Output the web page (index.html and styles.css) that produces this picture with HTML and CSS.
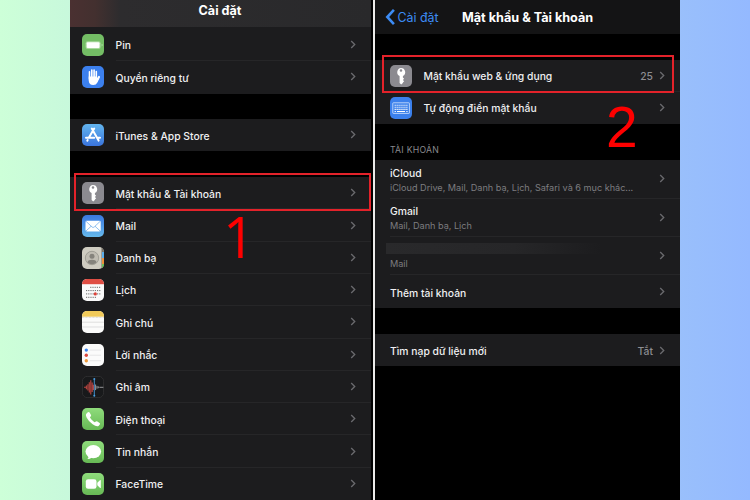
FILE: index.html
```html
<!DOCTYPE html>
<html lang="vi">
<head>
    <meta charset="UTF-8">
    <meta name="viewport" content="width=device-width, initial-scale=1.0">
    <title>Cài đặt - Mật khẩu &amp; Tài khoản</title>
    <link rel="stylesheet" href="styles.css">
</head>
<body>
    <svg class="defs" width="0" height="0">
        <defs>
            <linearGradient id="green" x1="0" y1="0" x2="0" y2="1">
                <stop offset="0" stop-color="#8fdc7c"/>
                <stop offset="1" stop-color="#67b955"/>
            </linearGradient>
            <linearGradient id="store" x1="0" y1="0" x2="0" y2="1">
                <stop offset="0" stop-color="#63b5ee"/>
                <stop offset="1" stop-color="#3a74dd"/>
            </linearGradient>
            <linearGradient id="mail" x1="0" y1="0" x2="0" y2="1">
                <stop offset="0" stop-color="#3a78e0"/>
                <stop offset="1" stop-color="#66b9ec"/>
            </linearGradient>
            <clipPath id="round"><rect width="22" height="22" rx="5"/></clipPath>
        </defs>
        <symbol id="arrow" viewBox="0 0 6 9">
            <path d="M1.2 1.1 4.7 4.5 1.2 7.9" fill="none" stroke="currentColor" stroke-width="1.35"/>
        </symbol>
        <symbol id="key" viewBox="0 0 22 22">
            <rect width="22" height="22" rx="5" fill="#8b8a90"/>
            <path fill="#fff" fill-rule="evenodd" d="M11 2.9a4.3 4.3 0 0 1 1.9 8.1v1.6l1.2 1.1-1.2 1.2 1.3 1.3-1.3 1.3v.4L11.2 19.4 9.6 18v-7A4.3 4.3 0 0 1 11 2.9zm0 1.3a1.3 1.3 0 1 0 0 2.6 1.3 1.3 0 0 0 0-2.6z"/>
        </symbol>
    </svg>

    <div class="stage">
        <div class="phone phone-left">
            <div class="header header-left">Cài đặt</div>
            <div class="group group-first">
                <div class="row">
                    <svg class="icon" viewBox="0 0 22 22"><rect width="22" height="22" rx="5" fill="#74bd65"/><rect x="3.6" y="7.2" width="15" height="7.8" rx="2" fill="#a9d99e"/><rect x="4.7" y="8.3" width="12.8" height="5.6" rx="1" fill="#fff"/><path d="M19.6 9.8v2.6q1-.4 1-1.3t-1-1.3z" fill="#b9e2b0"/></svg>
                    <div class="cell"><span class="label">Pin</span><svg class="arrow"><use href="#arrow"/></svg></div>
                </div>
                <div class="row">
                    <svg class="icon" viewBox="0 0 22 22"><rect width="22" height="22" rx="5" fill="#3c80ee"/><g stroke="#fff" stroke-linecap="round" fill="none"><path d="M7.5 5.7V13M9.8 4V12M12.1 4V12M14.3 5.6V13" stroke-width="1.6"/><path d="M17 10.8 14.5 15" stroke-width="1.9"/></g><path d="M6.7 10.5h8.4v2.2l1.8-2 .9.8-2.4 5Q14.2 19 11.3 19 7 19 6.7 14.5z" fill="#fff"/></svg>
                    <div class="cell"><span class="label">Quyền riêng tư</span><svg class="arrow"><use href="#arrow"/></svg></div>
                </div>
            </div>
            <div class="group">
                <div class="row">
                    <svg class="icon" viewBox="0 0 22 22"><rect width="22" height="22" rx="5" fill="url(#store)"/><g stroke="#fff" stroke-width="2" stroke-linecap="round" fill="none"><path d="M12.2 4.6 6.8 13.7M9.8 4.6 16.6 16.6M4 13.8h8.2M15.4 13.8H18M5.7 16 5.3 16.7"/></g></svg>
                    <div class="cell"><span class="label">iTunes &amp; App Store</span><svg class="arrow"><use href="#arrow"/></svg></div>
                </div>
            </div>
            <div class="group group-last">
                <div class="row">
                    <svg class="icon"><use href="#key"/></svg>
                    <div class="cell"><span class="label">Mật khẩu &amp; Tài khoản</span><svg class="arrow"><use href="#arrow"/></svg></div>
                    <div class="mark mark-1"></div>
                </div>
                <div class="row">
                    <svg class="icon" viewBox="0 0 22 22"><rect width="22" height="22" rx="5" fill="url(#mail)"/><rect x="3.5" y="5.7" width="15.2" height="10.7" rx="1.4" fill="#fff"/><path d="M4 6.3 10 12q1.1 1 2.2 0l6-5.7M4 16l5.2-4.8M18.2 16 13 11.2" fill="none" stroke="#63a5e6" stroke-width=".7"/></svg>
                    <div class="cell"><span class="label">Mail</span><svg class="arrow"><use href="#arrow"/></svg></div>
                </div>
                <div class="row">
                    <svg class="icon" viewBox="0 0 22 22"><g clip-path="url(#round)"><rect width="22" height="22" fill="#cfccc1"/><path d="M19.5 0H22v22h-2.5z" fill="#777268"/><path d="M20 5h2v6h-2z" fill="#5aaeea"/><path d="M20 11h2v6h-2z" fill="#ee923c"/><path d="M20 17h2v5h-2z" fill="#68c45a"/></g><circle cx="10" cy="11" r="6.7" fill="#c0bdb3" stroke="#918f87" stroke-width=".7"/><circle cx="10" cy="9.2" r="2.5" fill="#85837c"/><path d="M5.4 15.2Q6.3 12.8 10 12.8t4.6 2.4Q12.8 17.3 10 17.3t-4.6-2.1z" fill="#85837c"/></svg>
                    <div class="cell"><span class="label">Danh bạ</span><svg class="arrow"><use href="#arrow"/></svg></div>
                </div>
                <div class="row">
                    <svg class="icon" viewBox="0 0 22 22"><g clip-path="url(#round)"><rect width="22" height="22" fill="#fafafa"/><rect width="22" height="5.2" fill="#df4d43"/></g><g stroke="#6a6a6a" stroke-width="1" stroke-dasharray="1.2 1"><path d="M8.2 8.3H19M4 11.6H19M4 14.9H19M4 18.3h10.5"/></g><circle cx="13.3" cy="14.9" r="1.6" fill="#dd4238"/></svg>
                    <div class="cell"><span class="label">Lịch</span><svg class="arrow"><use href="#arrow"/></svg></div>
                </div>
                <div class="row">
                    <svg class="icon" viewBox="0 0 22 22"><g clip-path="url(#round)"><rect width="22" height="22" fill="#fbfbfa"/><rect width="22" height="5.7" fill="#f1ca59"/><path d="M0 6.4h22" stroke="#b8b4a6" stroke-width=".6" stroke-dasharray=".7 .7"/><path d="M0 11.2h22M0 16h22" stroke="#d3d3d3" stroke-width=".7"/></g></svg>
                    <div class="cell"><span class="label">Ghi chú</span><svg class="arrow"><use href="#arrow"/></svg></div>
                </div>
                <div class="row">
                    <svg class="icon" viewBox="0 0 22 22"><rect width="22" height="22" rx="5" fill="#fbfbfb"/><path d="M7.7 6.1H19M7.7 11.2H19M7.7 16.7H19" stroke="#dddddf" stroke-width=".7"/><circle cx="4.3" cy="6.1" r="1.7" fill="#3b84ee"/><circle cx="4.3" cy="11.3" r="1.7" fill="#dd4a40"/><circle cx="4.3" cy="16.7" r="1.7" fill="#ee9b3c"/></svg>
                    <div class="cell"><span class="label">Lời nhắc</span><svg class="arrow"><use href="#arrow"/></svg></div>
                </div>
                <div class="row">
                    <svg class="icon" viewBox="0 0 22 22"><rect x=".4" y=".4" width="21.2" height="21.2" rx="4.8" fill="#18191b" stroke="#333335" stroke-width=".8"/><path d="M2 11.3h2M4.4 9.4v3.8M5.9 8.3v6.2M7.3 6.2v10.2M8.8 4.2v14.2M10.2 6.6v9.4M11.4 8.7v5.2" stroke="#b84540" stroke-width="1.1"/><path d="M13.6 8.5v5.6M15 9.9v2.8M16.3 10.4v1.8M17.4 11.3h4" stroke="#a5a5a8" stroke-width=".9"/><path d="M12.3 3v17" stroke="#4a9ce0" stroke-width=".9"/><circle cx="12.3" cy="3.1" r="1" fill="#4a9ce0"/><circle cx="12.3" cy="19.7" r="1" fill="#4a9ce0"/></svg>
                    <div class="cell"><span class="label">Ghi âm</span><svg class="arrow"><use href="#arrow"/></svg></div>
                </div>
                <div class="row">
                    <svg class="icon" viewBox="0 0 22 22"><rect width="22" height="22" rx="5" fill="url(#green)"/><path d="M4.1 5.9 5.8 4.2Q6.8 3.6 7.6 4.6L9 6.9Q9.4 7.9 8.6 8.6L7.9 9.3Q8.6 11.2 11.6 13.4L12.8 14.2 13.8 13.4Q14.6 12.9 15.4 13.4L17.6 15Q18.4 15.8 17.8 16.6L16.5 17.9Q14.5 19 10.6 16.2 6.4 13.3 4.6 9.6 3.5 7.2 4.1 5.9z" fill="#fff"/></svg>
                    <div class="cell"><span class="label">Điện thoại</span><svg class="arrow"><use href="#arrow"/></svg></div>
                </div>
                <div class="row">
                    <svg class="icon" viewBox="0 0 22 22"><rect width="22" height="22" rx="5" fill="url(#green)"/><ellipse cx="11.3" cy="10.6" rx="7.8" ry="6.6" fill="#fff"/><path d="M6.6 14.5Q6.8 16.8 5.4 17.9 8.2 17.9 9.8 16.4z" fill="#fff"/></svg>
                    <div class="cell"><span class="label">Tin nhắn</span><svg class="arrow"><use href="#arrow"/></svg></div>
                </div>
                <div class="row">
                    <svg class="icon" viewBox="0 0 22 22"><rect width="22" height="22" rx="5" fill="url(#green)"/><rect x="3.8" y="6.2" width="10.7" height="9.6" rx="2.3" fill="#fff"/><path d="M15.3 9.7 17.9 7.2Q18.8 6.7 18.8 7.6v6.9q0 .9-.9.3L15.3 12.3z" fill="#fff"/></svg>
                    <div class="cell"><span class="label">FaceTime</span><svg class="arrow"><use href="#arrow"/></svg></div>
                </div>
            </div>
            <span class="step step-1">1</span>
        </div>

        <div class="phone phone-right">
            <div class="header header-right">
                <svg class="back-icon" viewBox="0 0 11 18"><path d="M8.9 1.9 2.3 9l6.6 7.1" fill="none" stroke="#3d8cf5" stroke-width="2.6"/></svg>
                <span class="back">Cài đặt</span>
                <span class="title">Mật khẩu &amp; Tài khoản</span>
            </div>
            <div class="group group-passwords">
                <div class="row">
                    <svg class="icon"><use href="#key"/></svg>
                    <div class="cell"><span class="label">Mật khẩu web &amp; ứng dụng</span><span class="value">25</span><svg class="arrow"><use href="#arrow"/></svg></div>
                    <div class="mark mark-2"></div>
                </div>
                <div class="row">
                    <svg class="icon" viewBox="0 0 22 22"><rect width="22" height="22" rx="5" fill="#3b80ec"/><rect x="2.8" y="5.8" width="16.6" height="10.6" rx=".6" fill="none" stroke="#d8e6fc" stroke-width=".8"/><path d="M4.6 8.2h13M4.6 10.3h13M4.6 12.4h13" stroke="#fff" stroke-width="1.1" stroke-dasharray="1.2 .75"/><path d="M4.6 14.5h1.3M7 14.5h8M16.3 14.5h1.3" stroke="#fff" stroke-width="1"/></svg>
                    <div class="cell"><span class="label">Tự động điền mật khẩu</span><svg class="arrow"><use href="#arrow"/></svg></div>
                </div>
            </div>
            <div class="section-title">TÀI KHOẢN</div>
            <div class="group group-accounts">
                <div class="account">
                    <div class="account-text"><span class="label">iCloud</span><span class="detail">iCloud Drive, Mail, Danh bạ, Lịch, Safari và 6 mục khác...</span></div>
                    <svg class="arrow"><use href="#arrow"/></svg>
                </div>
                <div class="account">
                    <div class="account-text"><span class="label">Gmail</span><span class="detail">Mail, Danh bạ, Lịch</span></div>
                    <svg class="arrow"><use href="#arrow"/></svg>
                </div>
                <div class="account">
                    <div class="account-text"><span class="hidden-name"></span><span class="detail">Mail</span></div>
                    <svg class="arrow"><use href="#arrow"/></svg>
                </div>
                <div class="account account-add">
                    <span class="label">Thêm tài khoản</span>
                    <svg class="arrow"><use href="#arrow"/></svg>
                </div>
            </div>
            <div class="group group-fetch">
                <div class="account account-fetch">
                    <span class="label">Tìm nạp dữ liệu mới</span>
                    <span class="value">Tắt</span>
                    <svg class="arrow"><use href="#arrow"/></svg>
                </div>
            </div>
            <span class="step step-2">2</span>
        </div>
    </div>
</body>
</html>
```

FILE: styles.css
```css
* {
    box-sizing: border-box;
}
body {
    margin: 0;
    height: 500px;
    overflow: hidden;
    font-family: Inter, "Liberation Sans", sans-serif;
    font-size: 10.35px;
    font-weight: 500;
    color: #f0f0f2;
    background: linear-gradient(90deg, #cdffd8, #94b9ff);
}
.defs {
    position: absolute;
}
.stage {
    display: flex;
    width: 610px;
    height: 500px;
    margin-left: 70px;
    background-color: #000;
}
.phone {
    position: relative;
    height: 500px;
    background-color: #000;
}
.phone-left {
    width: 302px;
    border-right: 1px solid #000;
}
.phone-right {
    width: 307px;
    margin-left: 1px;
    border-left: 2px solid #ecebea;
}
.header {
    display: flex;
    font-weight: 700;
    color: #fff;
}
.header-left {
    height: 27px;
    justify-content: center;
    padding: 2px 1px 0 0;
    font-size: 12.6px;
    line-height: 18px;
    background: linear-gradient(90deg, #4a3031 0, #43302f 25px, #2d2c2e 50px, #29292b 100%);
}
.header-right {
    height: 34px;
    align-items: center;
    padding-left: 10px;
    font-size: 12.65px;
    background-color: #141415;
}
.back-icon {
    width: 11px;
    height: 18px;
}
.back {
    width: 66px;
    padding-left: 1.5px;
    font-size: 12.4px;
    font-weight: 400;
    color: #3d8cf5;
}
.group {
    margin-top: 25.6px;
    background-color: #1c1c1e;
}
.group-first {
    margin-top: 0;
    padding-top: 2px;
    border-top: 0;
}
.row {
    position: relative;
    display: flex;
    align-items: center;
    height: 32.3px;
    padding-left: 12px;
}
.icon {
    width: 22px;
    height: 22px;
    flex: none;
}
.cell {
    display: flex;
    align-items: center;
    flex: 1;
    height: 100%;
    margin-left: 11.5px;
    padding-right: 15px;
    border-bottom: 1px solid #262628;
}
.row:last-child .cell {
    border-bottom-color: transparent;
}
.label {
    flex: 1;
    padding-top: 1.6px;
    white-space: nowrap;
}
.arrow {
    width: 6px;
    height: 9px;
    flex: none;
    color: #6a6a6e;
}
.value {
    margin-right: 6px;
    padding-top: 1.6px;
    color: #8d8d92;
}
.mark {
    position: absolute;
    border: 2px solid #e3222a;
    z-index: 1;
}
.mark-1 {
    left: 4px;
    right: 0;
    top: -4px;
    height: 38px;
}
.mark-2 {
    left: 7px;
    right: 6px;
    top: -5px;
    height: 38px;
}
.step {
    position: absolute;
    font-family: "Liberation Sans", Arial, sans-serif;
    font-size: 57px;
    font-weight: 400;
    line-height: 57px;
    color: #fe0000;
}
.step-1 {
    left: 153px;
    top: 208px;
    font-family: "Open Sans", sans-serif;
    font-size: 56px;
}
.step-2 {
    left: 231px;
    top: 99px;
}
.phone-right .row {
    padding-left: 15px;
}
.phone-right .cell {
    padding-right: 15px;
}
.section-title {
    height: 36px;
    padding: 20px 0 0 15px;
    font-size: 8.7px;
    line-height: 13px;
    font-weight: 400;
    letter-spacing: 0.25px;
    color: #89898d;
}
.group-accounts {
    margin-top: 0;
}
.account {
    display: flex;
    align-items: center;
    height: 38.4px;
    margin-left: 15px;
    padding-right: 15px;
    border-bottom: 1px solid #262628;
}
.account-text {
    display: flex;
    flex-direction: column;
    flex: 1;
    height: 100%;
    padding-top: 5.5px;
}
.account-text .label {
    flex: none;
    padding-top: 0;
    line-height: 14px;
}
.detail {
    margin-top: 1px;
    font-size: 9.12px;
    line-height: 14px;
    font-weight: 400;
    white-space: nowrap;
    color: #7c7c80;
}
.hidden-name {
    height: 11px;
    width: 215px;
    margin: 1px 0 2px -4px;
    background: linear-gradient(90deg, #29292b 0, #262628 60%, #1c1c1e 100%);
}
.account-add {
    height: 33px;
    border-bottom: 0;
}
.account-fetch {
    height: 32.4px;
    border-bottom: 0;
}
```
